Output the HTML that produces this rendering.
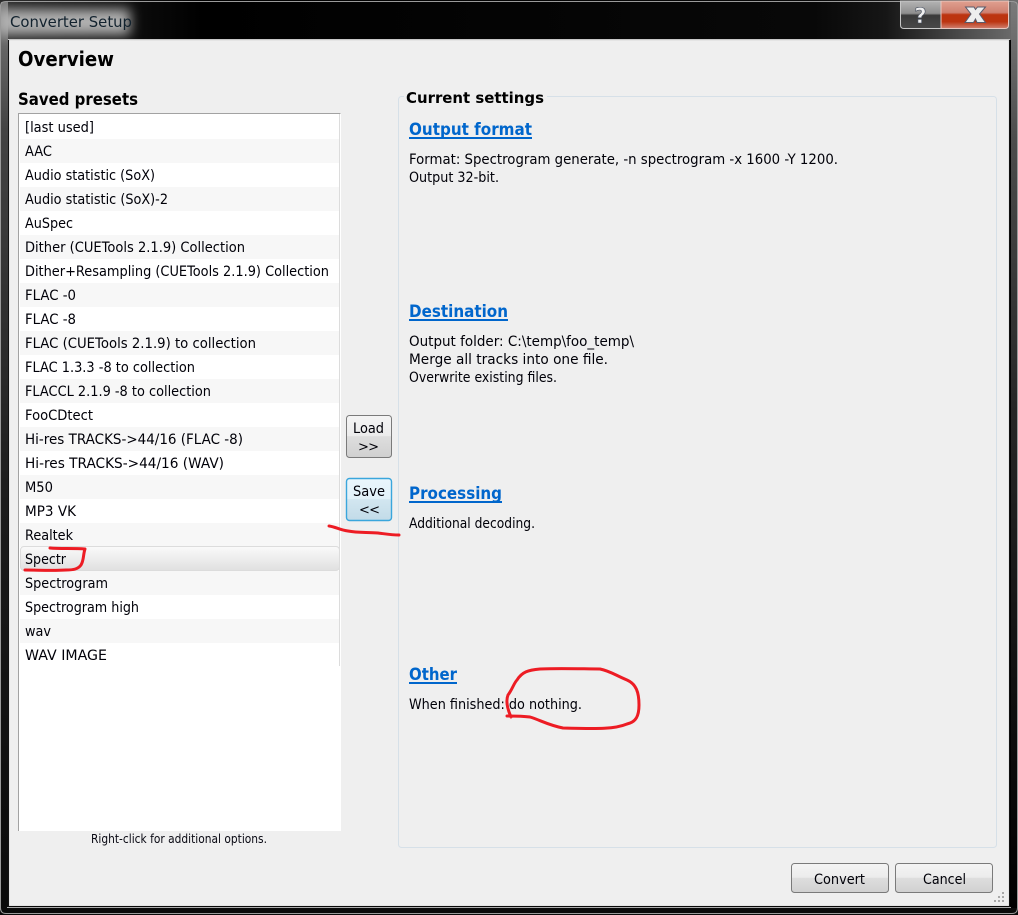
<!DOCTYPE html>
<html><head><meta charset="utf-8"><title>Converter Setup</title>
<style>
html,body{margin:0;padding:0;background:#000;}
svg{display:block;}
text{font-family:"DejaVu Sans","Liberation Sans",sans-serif;fill:#000;}
.r{font-size:14.5px;fill:#000008;}
.h{font-weight:bold;}
.l{font-weight:bold;font-size:16.5px;fill:#0066cc;}
</style></head><body>
<svg width="1018" height="915" viewBox="0 0 1018 915" xmlns="http://www.w3.org/2000/svg">
<defs>
<linearGradient id="tb" x1="0" x2="1" y1="0" y2="0"><stop offset="0" stop-color="#222"/><stop offset=".2" stop-color="#000"/><stop offset=".8" stop-color="#080808"/><stop offset=".87" stop-color="#161616"/><stop offset=".94" stop-color="#484848"/><stop offset="1" stop-color="#6e6e6e"/></linearGradient>
<linearGradient id="rs" x1="0" x2="0" y1="0" y2="1"><stop offset="0" stop-color="#7a7a7a"/><stop offset=".15" stop-color="#4c4c4c"/><stop offset=".45" stop-color="#262626"/><stop offset=".75" stop-color="#101010"/><stop offset="1" stop-color="#000"/></linearGradient>
<linearGradient id="ls" x1="0" x2="0" y1="0" y2="1"><stop offset="0" stop-color="#777"/><stop offset=".14" stop-color="#444"/><stop offset=".55" stop-color="#1c1c1c"/><stop offset="1" stop-color="#0a0a0a"/></linearGradient>
<linearGradient id="btn" x1="0" x2="0" y1="0" y2="1"><stop offset="0" stop-color="#f4f4f4"/><stop offset=".48" stop-color="#ececec"/><stop offset=".5" stop-color="#dedede"/><stop offset="1" stop-color="#d0d0d0"/></linearGradient>
<linearGradient id="bts" x1="0" x2="0" y1="0" y2="1"><stop offset="0" stop-color="#eaf6fc"/><stop offset=".48" stop-color="#e2f1f9"/><stop offset=".5" stop-color="#d2e6f0"/><stop offset="1" stop-color="#c2dbe8"/></linearGradient>
<linearGradient id="sel" x1="0" x2="0" y1="0" y2="1"><stop offset="0" stop-color="#fafafa"/><stop offset="1" stop-color="#e0e0e0"/></linearGradient>
<linearGradient id="red" x1="0" x2="0" y1="0" y2="1"><stop offset="0" stop-color="#e0a090"/><stop offset=".42" stop-color="#cf8070"/><stop offset=".5" stop-color="#bc3410"/><stop offset=".75" stop-color="#bc3410"/><stop offset="1" stop-color="#d08070"/></linearGradient>
<linearGradient id="gry" x1="0" x2="0" y1="0" y2="1"><stop offset="0" stop-color="#b4b4b4"/><stop offset=".45" stop-color="#8e8e8e"/><stop offset=".52" stop-color="#3a3a3a"/><stop offset="1" stop-color="#484848"/></linearGradient>
<filter id="blur" x="-30%" y="-80%" width="160%" height="260%"><feGaussianBlur stdDeviation="6"/></filter>
</defs>

<!-- window frame -->
<rect width="1018" height="915" fill="#000"/>
<rect x="0" y="0" width="1018" height="40" fill="url(#tb)"/>
<rect x="1" y="2" width="7" height="911" fill="url(#ls)"/>
<rect x="1011" y="2" width="6" height="911" fill="url(#rs)"/>
<rect x="-4" y="9" width="134" height="26" fill="#b0b0b0" filter="url(#blur)"/>
<rect x="0" y="908" width="1018" height="7" fill="#0a0a0a"/>
<path d="M.5 910V6Q.5 1.5 6 1.5H1012Q1017.5 1.5 1017.5 6V908Q1017.5 913.5 1012 913.5H6Q.5 913.5 .5 908Z" fill="none" stroke="#9a9a9a" stroke-width="1"/>
<path d="M8.5 907V39.5H1009.5V907Z" fill="none" stroke="#111"/>
<path d="M8 39.5H1010" stroke="#c8c8c8"/>
<rect x="9.5" y="40.5" width="999" height="865" fill="#efefef" stroke="#fff" stroke-opacity=".8"/>
<path d="M7 907.5H1011" stroke="#aaa"/>

<text x="10" y="27" font-size="15" style="fill:#12222e" textLength="122" lengthAdjust="spacingAndGlyphs">Converter Setup</text>

<!-- caption buttons -->
<path d="M900.5 1V25Q900.5 28.5 904 28.5H941V1Z" fill="url(#gry)" stroke="#c8c8c8"/>
<path d="M941 1V28.5H1005Q1008.5 28.5 1008.5 25V1Z" fill="url(#red)" stroke="#e8c8c0"/>
<text x="920.5" y="23" font-size="21" text-anchor="middle" class="h" style="fill:#eee;stroke:#444c5c;stroke-width:.6">?</text>
<path d="M965.5 7H974L975.5 9.5L977.5 7H985.5L979.5 14L985.5 22.5H977L975.5 19L973.5 22.5H965L971 14Z" fill="#eee" stroke="#5a5a6a" stroke-width="1"/>

<!-- headers -->
<text x="18" y="66" font-size="20" class="h" textLength="96" lengthAdjust="spacingAndGlyphs">Overview</text>
<text x="18" y="105" font-size="16.5" class="h" textLength="120" lengthAdjust="spacingAndGlyphs">Saved presets</text>

<!-- list -->
<rect x="18" y="113" width="323" height="718" fill="#fff"/>
<path d="M18.5 831V113.5H340.5" fill="none" stroke="#a2a2a2"/>
<g fill="#f7f7f7">
<rect x="20" y="139" width="319" height="24"/><rect x="20" y="187" width="319" height="24"/><rect x="20" y="235" width="319" height="24"/><rect x="20" y="283" width="319" height="24"/><rect x="20" y="331" width="319" height="24"/><rect x="20" y="379" width="319" height="24"/><rect x="20" y="427" width="319" height="24"/><rect x="20" y="475" width="319" height="24"/><rect x="20" y="523" width="319" height="24"/><rect x="20" y="571" width="319" height="24"/><rect x="20" y="619" width="319" height="24"/>
</g>
<rect x="339" y="114" width="1" height="552" fill="#dcdcdc"/>
<rect x="20.5" y="546.5" width="319" height="24" rx="3.5" fill="url(#sel)" stroke="#dcdcdc"/>

<text class="r" x="25" y="132" lengthAdjust="spacingAndGlyphs" textLength="69">[last used]</text>
<text class="r" x="25" y="156" lengthAdjust="spacingAndGlyphs" textLength="27">AAC</text>
<text class="r" x="25" y="180" lengthAdjust="spacingAndGlyphs" textLength="130">Audio statistic (SoX)</text>
<text class="r" x="25" y="204" lengthAdjust="spacingAndGlyphs" textLength="143">Audio statistic (SoX)-2</text>
<text class="r" x="25" y="228" lengthAdjust="spacingAndGlyphs" textLength="48">AuSpec</text>
<text class="r" x="25" y="252" lengthAdjust="spacingAndGlyphs" textLength="220">Dither (CUETools 2.1.9) Collection</text>
<text class="r" x="25" y="276" lengthAdjust="spacingAndGlyphs" textLength="304">Dither+Resampling (CUETools 2.1.9) Collection</text>
<text class="r" x="25" y="300" lengthAdjust="spacingAndGlyphs" textLength="51">FLAC -0</text>
<text class="r" x="25" y="324" lengthAdjust="spacingAndGlyphs" textLength="51">FLAC -8</text>
<text class="r" x="25" y="348" lengthAdjust="spacingAndGlyphs" textLength="231">FLAC (CUETools 2.1.9) to collection</text>
<text class="r" x="25" y="372" lengthAdjust="spacingAndGlyphs" textLength="170">FLAC 1.3.3 -8 to collection</text>
<text class="r" x="25" y="396" lengthAdjust="spacingAndGlyphs" textLength="186">FLACCL 2.1.9 -8 to collection</text>
<text class="r" x="25" y="420" lengthAdjust="spacingAndGlyphs" textLength="68">FooCDtect</text>
<text class="r" x="25" y="444" lengthAdjust="spacingAndGlyphs" textLength="218">Hi-res TRACKS-&gt;44/16 (FLAC -8)</text>
<text class="r" x="25" y="468" lengthAdjust="spacingAndGlyphs" textLength="199">Hi-res TRACKS-&gt;44/16 (WAV)</text>
<text class="r" x="25" y="492" lengthAdjust="spacingAndGlyphs" textLength="28">M50</text>
<text class="r" x="25" y="516" lengthAdjust="spacingAndGlyphs" textLength="51">MP3 VK</text>
<text class="r" x="25" y="540" lengthAdjust="spacingAndGlyphs" textLength="48">Realtek</text>
<text class="r" x="25" y="564" lengthAdjust="spacingAndGlyphs" textLength="41">Spectr</text>
<text class="r" x="25" y="588" lengthAdjust="spacingAndGlyphs" textLength="83">Spectrogram</text>
<text class="r" x="25" y="612" lengthAdjust="spacingAndGlyphs" textLength="114">Spectrogram high</text>
<text class="r" x="25" y="636" lengthAdjust="spacingAndGlyphs" textLength="26">wav</text>
<text class="r" x="25" y="660" lengthAdjust="spacingAndGlyphs" textLength="82">WAV IMAGE</text>

<text x="91" y="843" font-size="12.5" style="fill:#0a0a14" lengthAdjust="spacingAndGlyphs" textLength="176">Right-click for additional options.</text>

<!-- group box -->
<rect x="398.5" y="96.5" width="598" height="751" rx="3" fill="none" stroke="#d6e0e8"/>
<rect x="404" y="90" width="143" height="14" fill="#efefef"/>
<text x="406" y="103" font-size="15.5" class="h" textLength="138" lengthAdjust="spacingAndGlyphs">Current settings</text>

<text class="l" x="409" y="135" textLength="123" lengthAdjust="spacingAndGlyphs">Output format</text>
<rect x="409" y="137" width="123" height="2" fill="#0066cc"/>
<text class="r" x="409" y="164" lengthAdjust="spacingAndGlyphs" textLength="429">Format: Spectrogram generate, -n spectrogram -x 1600 -Y 1200.</text>
<text class="r" x="409" y="182" lengthAdjust="spacingAndGlyphs" textLength="90">Output 32-bit.</text>

<text class="l" x="409" y="317" textLength="99" lengthAdjust="spacingAndGlyphs">Destination</text>
<rect x="409" y="319" width="99" height="2" fill="#0066cc"/>
<text class="r" x="409" y="346" lengthAdjust="spacingAndGlyphs" textLength="225">Output folder: C:\temp\foo_temp\</text>
<text class="r" x="409" y="364" lengthAdjust="spacingAndGlyphs" textLength="199">Merge all tracks into one file.</text>
<text class="r" x="409" y="382" lengthAdjust="spacingAndGlyphs" textLength="148">Overwrite existing files.</text>

<text class="l" x="409" y="499" textLength="93" lengthAdjust="spacingAndGlyphs">Processing</text>
<rect x="409" y="501" width="93" height="2" fill="#0066cc"/>
<text class="r" x="409" y="528" lengthAdjust="spacingAndGlyphs" textLength="126">Additional decoding.</text>

<text class="l" x="409" y="680" textLength="48" lengthAdjust="spacingAndGlyphs">Other</text>
<rect x="409" y="682" width="48" height="2" fill="#0066cc"/>
<text class="r" x="409" y="709" lengthAdjust="spacingAndGlyphs" textLength="173">When finished: do nothing.</text>

<!-- load / save -->
<rect x="346.5" y="415.5" width="45" height="42" rx="3" fill="url(#btn)" stroke="#7a7a7a"/>
<text class="r" x="353" y="433" lengthAdjust="spacingAndGlyphs" textLength="31">Load</text>
<text x="358" y="451" font-size="13" textLength="21" style="fill:#000008">&gt;&gt;</text>
<rect x="346.5" y="478.5" width="45" height="42" rx="3" fill="url(#bts)" stroke="#3aa6dc" stroke-width="1.4"/>
<text class="r" x="353" y="496" lengthAdjust="spacingAndGlyphs" textLength="32">Save</text>
<text x="359" y="514" font-size="13" textLength="21" style="fill:#000008">&lt;&lt;</text>

<!-- bottom buttons -->
<rect x="791.5" y="863.5" width="97" height="29" rx="3" fill="url(#btn)" stroke="#7a7a7a"/>
<text class="r" x="814" y="884" lengthAdjust="spacingAndGlyphs" textLength="51">Convert</text>
<rect x="895.5" y="863.5" width="97" height="29" rx="3" fill="url(#btn)" stroke="#7a7a7a"/>
<text class="r" x="923" y="884" lengthAdjust="spacingAndGlyphs" textLength="43">Cancel</text>

<!-- size grip -->
<g fill="#a8a8a8">
<rect x="1002" y="892" width="2" height="2"/>
<rect x="1002" y="896" width="2" height="2"/><rect x="998" y="896" width="2" height="2"/>
<rect x="1002" y="900" width="2" height="2"/><rect x="998" y="900" width="2" height="2"/><rect x="994" y="900" width="2" height="2"/>
</g>

<!-- red annotations -->
<g fill="none" stroke="#ed1c24" stroke-width="3" stroke-linecap="round" stroke-linejoin="round">
<path d="M329 526C336 527 340 530 348 531C358 533 368 532 378 533C386 534 392 535 399 535"/>
<path d="M50 548C60 549 74 548 85 549C83 555 84 560 81 565C78 569 74 570 66 570C52 571 38 570 25 570"/>
<path d="M511 717C507 708 506 700 508 695C512 690 514 683 517 680C522 672 528 670 540 669C560 668 585 669 600 669C610 671 615 675 627 680C636 684 639 692 639 705C639 716 636 722 627 724C615 729 600 729 563 728C548 725 540 720 530 717C522 716 515 716 507 716"/>
</g>
</svg>
</body></html>
